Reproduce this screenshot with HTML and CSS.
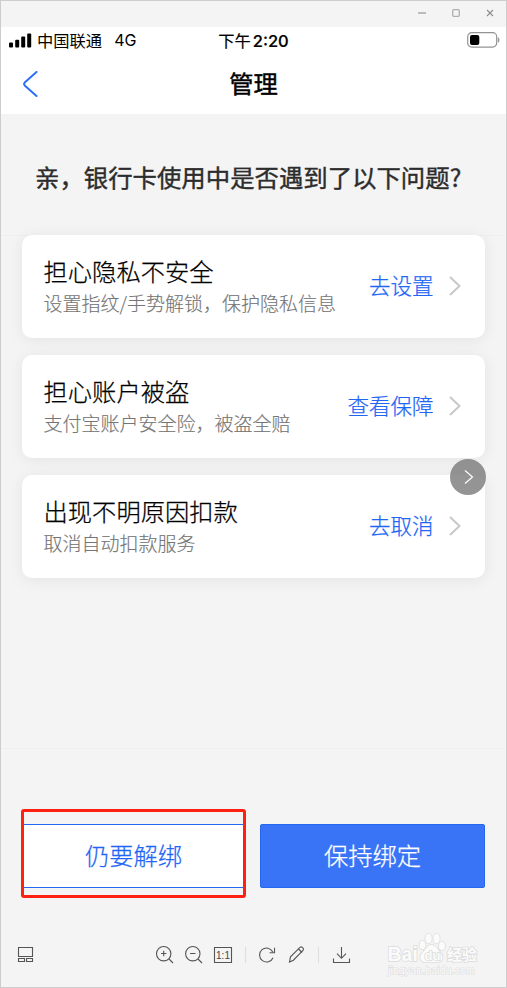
FILE: index.html
```html
<!DOCTYPE html>
<html lang="zh-CN">
<head>
<meta charset="utf-8">
<title>管理</title>
<link rel="stylesheet" href="styles.css">
</head>
<body>
<div class="window">
  <header class="titlebar">
    <svg width="80" height="12" viewBox="0 0 80 12" fill="none">
      <path d="M0 6h8" stroke="#bcbcbc" stroke-width="2"/>
      <rect x="34.7" y="2.7" width="6.6" height="6.6" rx="1" stroke="#b0b0b0" stroke-width="1.3"/>
      <path d="M69 3l6 6M75 3l-6 6" stroke="#8c8c8c" stroke-width="1.1"/>
    </svg>
  </header>
  <div class="phone-top">
    <div class="status">
      <div class="carrier">
        <svg width="23" height="15" viewBox="0 0 23 15"><rect x="0" y="9.5" width="4" height="5" rx="1"/><rect x="6.2" y="6.8" width="4" height="7.7" rx="1"/><rect x="12.2" y="3.5" width="4" height="11" rx="1"/><rect x="18.2" y="0.5" width="4" height="14" rx="1"/></svg>
        <span class="name">中国联通</span><span class="network">4G</span>
      </div>
      <div class="time">下午<span class="digits">2:20</span></div>
      <svg class="battery" width="34" height="16" viewBox="0 0 34 16"><rect x=".7" y=".7" width="29" height="14.4" rx="4" fill="none" stroke="#939393" stroke-width="1.2"/><rect x="3" y="3" width="9.3" height="10" rx="2"/><path d="M31.3 5.7q1.6 2.2 0 4.6z" fill="#939393" stroke="#939393" stroke-width=".8"/></svg>
    </div>
    <div class="nav">
      <svg class="back" width="16" height="26" viewBox="0 0 16 26" fill="none" stroke="#2e70f5" stroke-width="2" stroke-linecap="round" stroke-linejoin="round"><path d="M14.5 1L2.7 11.6q-1.2 1.4 0 2.8L14.5 25"/></svg>
      <h1>管理</h1>
    </div>
  </div>
  <main>
    <h2>亲，银行卡使用中是否遇到了以下问题?</h2>
    <section class="cards">
      <article class="card">
        <div class="copy"><h3>担心隐私不安全</h3><p>设置指纹/手势解锁，保护隐私信息</p></div>
        <a>去设置</a><svg class="chevron" width="12" height="20" viewBox="0 0 12 20"><path d="M1 1l9.5 9L1 19"/></svg>
      </article>
      <article class="card">
        <div class="copy"><h3>担心账户被盗</h3><p>支付宝账户安全险，被盗全赔</p></div>
        <a>查看保障</a><svg class="chevron" width="12" height="20" viewBox="0 0 12 20"><path d="M1 1l9.5 9L1 19"/></svg>
      </article>
      <article class="card">
        <div class="copy"><h3>出现不明原因扣款</h3><p>取消自动扣款服务</p></div>
        <a>去取消</a><svg class="chevron" width="12" height="20" viewBox="0 0 12 20"><path d="M1 1l9.5 9L1 19"/></svg>
        <div class="next"><svg width="36" height="36" viewBox="0 0 36 36" fill="none" stroke="#fff" stroke-width="1.2"><path d="M15 11.5l7.5 6.5-7.5 6.5"/></svg></div>
      </article>
    </section>
  </main>
  <section class="actions">
    <div class="button outline">仍要解绑<div class="marker"></div></div>
    <div class="button primary">保持绑定</div>
  </section>
  <footer class="toolbar">
    <svg class="tools" width="340" height="22" viewBox="16 944 340 22" fill="none" stroke="#555" stroke-width="1.1">
      <path d="M18.5 947.5h14v9h-14zM18.5 958.5h6v3h-6zM26.5 958.5h6v3h-6z"/>
      <circle cx="163.7" cy="953.7" r="7.2"/><path d="M169 959l4 4M161 953.5h5.4M163.7 950.8v5.4"/>
      <circle cx="192.8" cy="953.7" r="7.2"/><path d="M198 959l4 4M190.1 953.5h5.4"/>
      <path d="M214.5 947.5h17v15h-17z"/>
      <text x="223" y="959" text-anchor="middle" class="ratio">1:1</text>
      <path d="M245.5 947v16M318.5 947v16" stroke="#dedede"/>
      <path d="M273 957.7a7 7 0 1 1-.2-5.8M274.5 947.7v5h-5"/>
      <path d="M289.5 962l1-5.2 9.7-9.7q1-.6 2 .2l1 1q.8 1 0 1.9l-9.8 10zM298.5 949l3.6 3.5"/>
      <path d="M341.5 947v11M337 953.6l4.5 4.7 4.5-4.7M333.5 958.5v4h16v-4"/>
    </svg>
    <svg class="watermark" width="94" height="48" viewBox="386 931 94 48" fill="#fbfbfb" stroke="#dcdcdc" stroke-width="1.6" paint-order="stroke">
      <ellipse cx="422.5" cy="945" rx="3" ry="4.3"/><ellipse cx="428.5" cy="938.5" rx="3.2" ry="4.7"/><ellipse cx="436.5" cy="938.5" rx="3.2" ry="4.7"/><ellipse cx="442" cy="946" rx="3" ry="4.3"/>
      <path d="M431.500 945c5 0 5 4 9 7.500 4 4.500 1.500 9.500-3 9.500h-12c-5 0-7-5-3-9.500 4-3.500 4-7.500 9-7.500z"/>
      <text x="387.5" y="961" class="wm-bai">Bai</text>
      <text x="424.5" y="959.5" class="wm-du">du</text>
      <text x="447" y="960" class="wm-cn">经验</text>
      <text x="388" y="974" class="wm-url">jingyan.baidu.com</text>
    </svg>
  </footer>
</div>
</body>
</html>
```

FILE: styles.css
```css
* { box-sizing: border-box; }
body {
  margin: 0;
  font-family: "Noto Sans CJK SC", "Noto Sans", sans-serif;
  color: #000;
}
h1, h2, h3, p { margin: 0; font-weight: 400; }
svg { display: block; flex: none; }
.window {
  width: 507px;
  height: 988px;
  display: flex;
  flex-direction: column;
  overflow: hidden;
  background: #f4f4f4;
  border: 1px solid #cdcdcd;
}
.titlebar {
  height: 26px;
  display: flex;
  justify-content: flex-end;
  padding: 6px 8px 0 0;
}
.phone-top { height: 87px; background: #fff; }
.status {
  height: 28px;
  display: grid;
  grid-template-columns: 1fr auto 1fr;
  align-items: center;
  padding: 0 5px 2px 8px;
  font-size: 16.3px;
  line-height: 24px;
}
.carrier { display: flex; align-items: center; }
.name { margin-left: 5px; padding-bottom: 1px; }
.network { font-family: Inter, sans-serif; font-size: 16px; margin-left: 12px; }
.time { padding-right: 3px; -webkit-text-stroke: 0.2px #000; }
.digits { font-family: Inter, sans-serif; font-size: 16.5px; font-weight: 500; margin-left: 2px; }
.battery { justify-self: end; }
.nav {
  height: 59px;
  display: grid;
  grid-template-columns: 1fr auto 1fr;
  align-items: center;
  padding: 0 21px 2px 21px;
}
.nav h1 { margin-top: -2px; font-size: 24.3px; line-height: 36px; -webkit-text-stroke: 0.45px #000; }
main { height: 635px; border-bottom: 1px solid #efefef; }
h2 {
  height: 122px;
  padding: 45px 0 0 34px;
  font-size: 24.4px;
  line-height: 36px;
  color: #2c2c2c;
  white-space: nowrap;
  -webkit-text-stroke: 0.4px #2c2c2c;
  border-bottom: 1px solid #efefef;
}
.cards {
  display: flex;
  flex-direction: column;
  gap: 17.5px;
  padding: 0 21px 0 20.5px;
  margin-top: -1px;
}
.card {
  position: relative;
  height: 102.6px;
  display: flex;
  align-items: center;
  padding: 0 24.5px 0 22px;
  background: #fff;
  border-radius: 10px;
  box-shadow: 0 2px 16px rgba(0, 0, 0, 0.07);
}
.copy { flex: 1; white-space: nowrap; }
.copy h3 { font-size: 24.3px; line-height: 34px; font-weight: 300; margin-top: -1px; -webkit-text-stroke: 0.25px #000; }
.copy p { font-size: 19px; line-height: 29px; font-weight: 300; color: #757575; -webkit-text-stroke: 0.15px #757575; }
.card a { margin-top: -3px; font-size: 21.5px; line-height: 32px; font-weight: 300; color: #1f66f5; -webkit-text-stroke: 0.25px #1f66f5; }
.chevron { margin-left: 15px; fill: none; stroke: #c8c8c8; stroke-width: 2; }
.next {
  position: absolute;
  top: -16px;
  right: -0.5px;
  border-radius: 50%;
  background: rgba(125, 125, 125, 0.82);
}
.actions {
  display: flex;
  gap: 14px;
  padding: 75px 21px 0 20px;
}
.button {
  position: relative;
  flex: 1;
  height: 64px;
  border: 1px solid #2468f2;
  border-radius: 2px;
  font-size: 24.3px;
  font-weight: 300;
  line-height: 60px;
  text-align: center;
  -webkit-text-stroke: 0.25px currentColor;
}
.outline { color: #1f66f5; background: #fff; }
.primary { color: #fff; background: #3974f7; }
.marker {
  position: absolute;
  inset: -16px -0.5px -11px -1px;
  border: 3px solid #ff2012;
  border-radius: 3px;
}
.toolbar {
  display: flex;
  align-items: flex-start;
  justify-content: space-between;
  padding: 43px 26px 0 15px;
}
.tools { margin-top: 13px; }
.ratio { font: 400 10px "Liberation Sans", sans-serif; fill: #444; stroke: none; }
.wm-bai { font: 700 19.5px "Liberation Sans", sans-serif; }
.wm-du { font: 700 13px "Liberation Sans", sans-serif; }
.wm-cn { font: 700 15px "Noto Sans CJK SC", sans-serif; }
.wm-url { font: 400 10.8px "Liberation Sans", sans-serif; stroke-width: 1; }
```
